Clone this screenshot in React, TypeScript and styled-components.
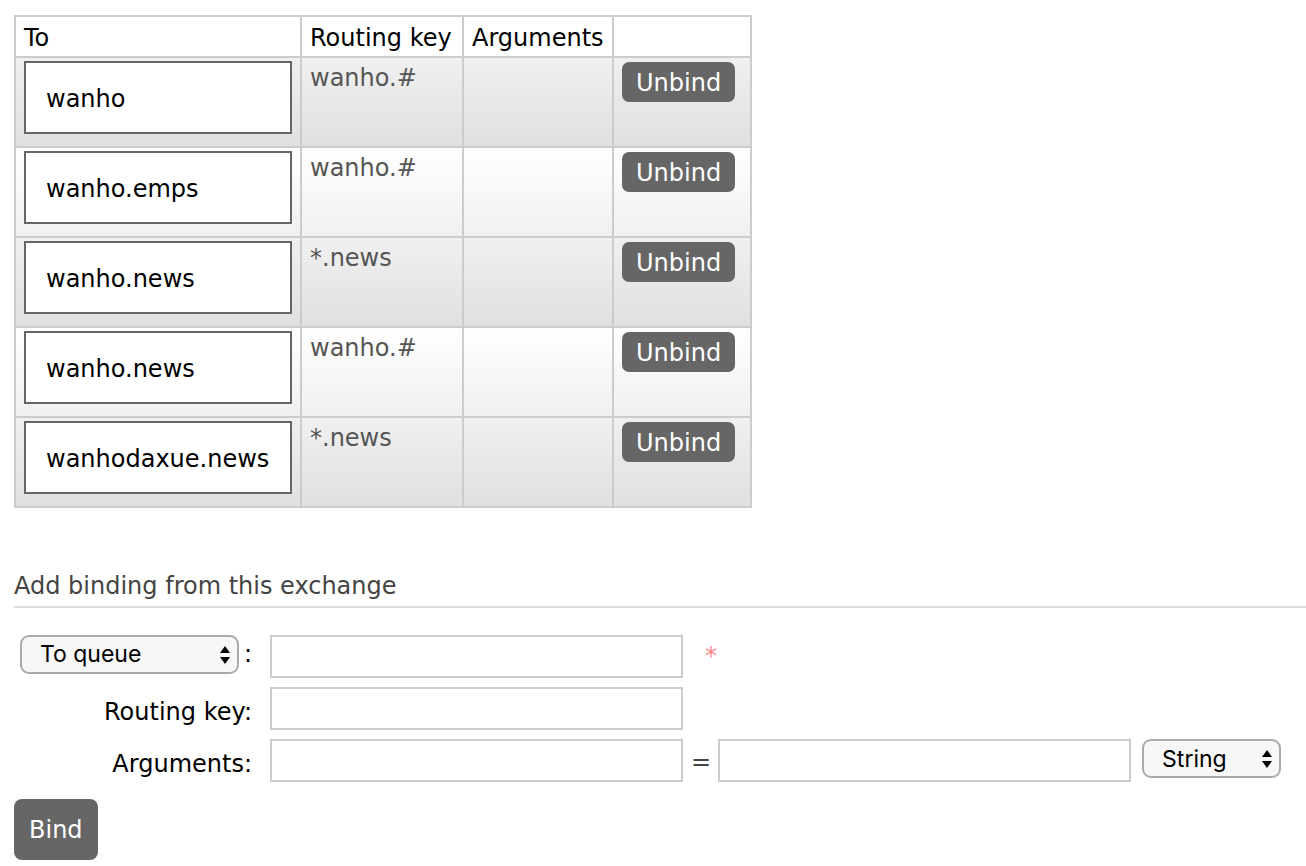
import React from "react";
import styled, { createGlobalStyle } from "styled-components";

const GlobalStyle = createGlobalStyle`
  html, body { margin: 0; padding: 0; background: #fff; }
  body {
    font-family: "DejaVu Sans", Verdana, sans-serif;
    font-size: 24px;
    color: #000;
  }
`;

const Page = styled.div`
  padding: 15px 0 0 14px;
  width: 1292px;
`;

const Table = styled.table`
  border-collapse: collapse;
  table-layout: fixed;
  border: 2px solid #ccc;
`;

const Th = styled.th<{ $w: number }>`
  width: ${(p) => p.$w}px;
  text-align: left;
  font-weight: normal;
  padding: 8px 8px 4px 8px;
  border: 2px solid #ccc;
  line-height: 27px;
  height: 27px;
  background: #fff;
  white-space: nowrap;
  overflow: visible;
`;

const Tr = styled.tr<{ $alt: boolean }>`
  height: 90px;
  td {
    background: ${(p) =>
      p.$alt
        ? "linear-gradient(to bottom, #f0f0f0 0%, #e0e0e0 100%)"
        : "linear-gradient(to bottom, #ffffff 0%, #f0f0f0 100%)"};
  }
`;

const Td = styled.td<{ $grey?: boolean }>`
  vertical-align: top;
  padding: 3px 8px 0 8px;
  border: 2px solid #ccc;
  line-height: 27px;
  color: ${(p) => (p.$grey ? "#555" : "#000")};
  white-space: nowrap;
`;

const KeyText = styled.div`
  padding-top: 4px;
`;

const NameBox = styled.div`
  box-sizing: border-box;
  height: 73px;
  border: 2px solid #666;
  background: #fff;
  display: flex;
  align-items: center;
  padding: 4px 0 0 20px;
  color: #000;
`;

const Button = styled.button<{ $big?: boolean }>`
  font-family: "DejaVu Sans", Verdana, sans-serif;
  font-size: 24px;
  line-height: 27px;
  color: #fff;
  background: #666;
  border: none;
  border-radius: ${(p) => (p.$big ? "8px" : "7px")};
  padding: ${(p) => (p.$big ? "18px 15px 16px 15px" : "8px 14px 5px 14px")};
  cursor: pointer;
  margin-top: ${(p) => (p.$big ? "0" : "1px")};
`;

const Heading = styled.h2`
  margin: 64px 0 0 0;
  padding-bottom: 6px;
  font-size: 24px;
  line-height: 28px;
  font-weight: normal;
  color: #444;
  border-bottom: 2px solid #ddd;
`;

const Form = styled.div`
  margin-top: 27px;
  display: flex;
  flex-direction: column;
  gap: 9px;
`;

const Row = styled.div`
  display: flex;
  align-items: flex-start;
`;

const Label = styled.div`
  width: 238px;
  margin-right: 18px;
  display: flex;
  justify-content: flex-end;
  align-items: center;
  height: 43px;
  padding-top: 8px;
  box-sizing: border-box;
  line-height: 27px;
  color: #000;
  white-space: nowrap;
`;

const SelectLabel = styled(Label)`
  align-items: flex-start;
  padding-top: 0;
`;

const Input = styled.input`
  box-sizing: border-box;
  width: 413px;
  height: 43px;
  border: 2px solid #ccc;
  background: #fff;
  padding: 0 6px;
  margin: 0;
  font-family: "DejaVu Sans", Verdana, sans-serif;
  font-size: 24px;
  outline: none;
`;

const SelectBox = styled.div<{ $w: number }>`
  box-sizing: border-box;
  width: ${(p) => p.$w}px;
  height: 39px;
  border: 2px solid #aaa;
  border-radius: 9px;
  background: #f7f7f7;
  display: flex;
  align-items: center;
  justify-content: space-between;
  padding: 0 6px 0 18px;
  font-family: Inter, "Liberation Sans", Arial, sans-serif;
  font-size: 23px;
  color: #000;
`;

const Colon = styled.span`
  margin-left: 5px;
  line-height: 39px;
`;

const Mandatory = styled.span`
  color: #f88;
  margin-left: 22px;
  line-height: 27px;
  margin-top: 8px;
`;

const Equals = styled.span`
  color: #444;
  margin: 0 7px 0 8px;
  height: 43px;
  display: flex;
  align-items: center;
  padding-top: 2px;
  box-sizing: border-box;
`;

const SelectGap = styled.div`
  margin-left: 11px;
`;

const BindRow = styled.div`
  margin-top: 8px;
`;

const Arrows = () => (
  <svg width="12" height="20" viewBox="0 0 12 20">
    <path d="M6 1 L11 8 L1 8 Z" fill="#000" />
    <path d="M6 19 L11 12 L1 12 Z" fill="#000" />
  </svg>
);

const Select = ({ label, width }: { label: string; width: number }) => (
  <SelectBox $w={width}>
    <span>{label}</span>
    <Arrows />
  </SelectBox>
);

const rows = [
  { to: "wanho", key: "wanho.#" },
  { to: "wanho.emps", key: "wanho.#" },
  { to: "wanho.news", key: "*.news" },
  { to: "wanho.news", key: "wanho.#" },
  { to: "wanhodaxue.news", key: "*.news" },
];

export default function App() {
  return (
    <>
      <GlobalStyle />
      <Page>
        <Table>
          <thead>
            <tr>
              <Th $w={268}>To</Th>
              <Th $w={144}>Routing key</Th>
              <Th $w={132}>Arguments</Th>
              <Th $w={120}></Th>
            </tr>
          </thead>
          <tbody>
            {rows.map((r, i) => (
              <Tr key={i} $alt={i % 2 === 0}>
                <Td>
                  <NameBox>{r.to}</NameBox>
                </Td>
                <Td $grey>
                  <KeyText>{r.key}</KeyText>
                </Td>
                <Td></Td>
                <Td>
                  <Button>Unbind</Button>
                </Td>
              </Tr>
            ))}
          </tbody>
        </Table>

        <Heading>Add binding from this exchange</Heading>

        <Form>
          <Row>
            <SelectLabel>
              <Select label="To queue" width={219} />
              <Colon>:</Colon>
            </SelectLabel>
            <Input />
            <Mandatory>*</Mandatory>
          </Row>
          <Row>
            <Label>Routing key:</Label>
            <Input />
          </Row>
          <Row>
            <Label>Arguments:</Label>
            <Input />
            <Equals>=</Equals>
            <Input />
            <SelectGap>
              <Select label="String" width={139} />
            </SelectGap>
          </Row>
          <BindRow>
            <Button $big>Bind</Button>
          </BindRow>
        </Form>
      </Page>
    </>
  );
}
